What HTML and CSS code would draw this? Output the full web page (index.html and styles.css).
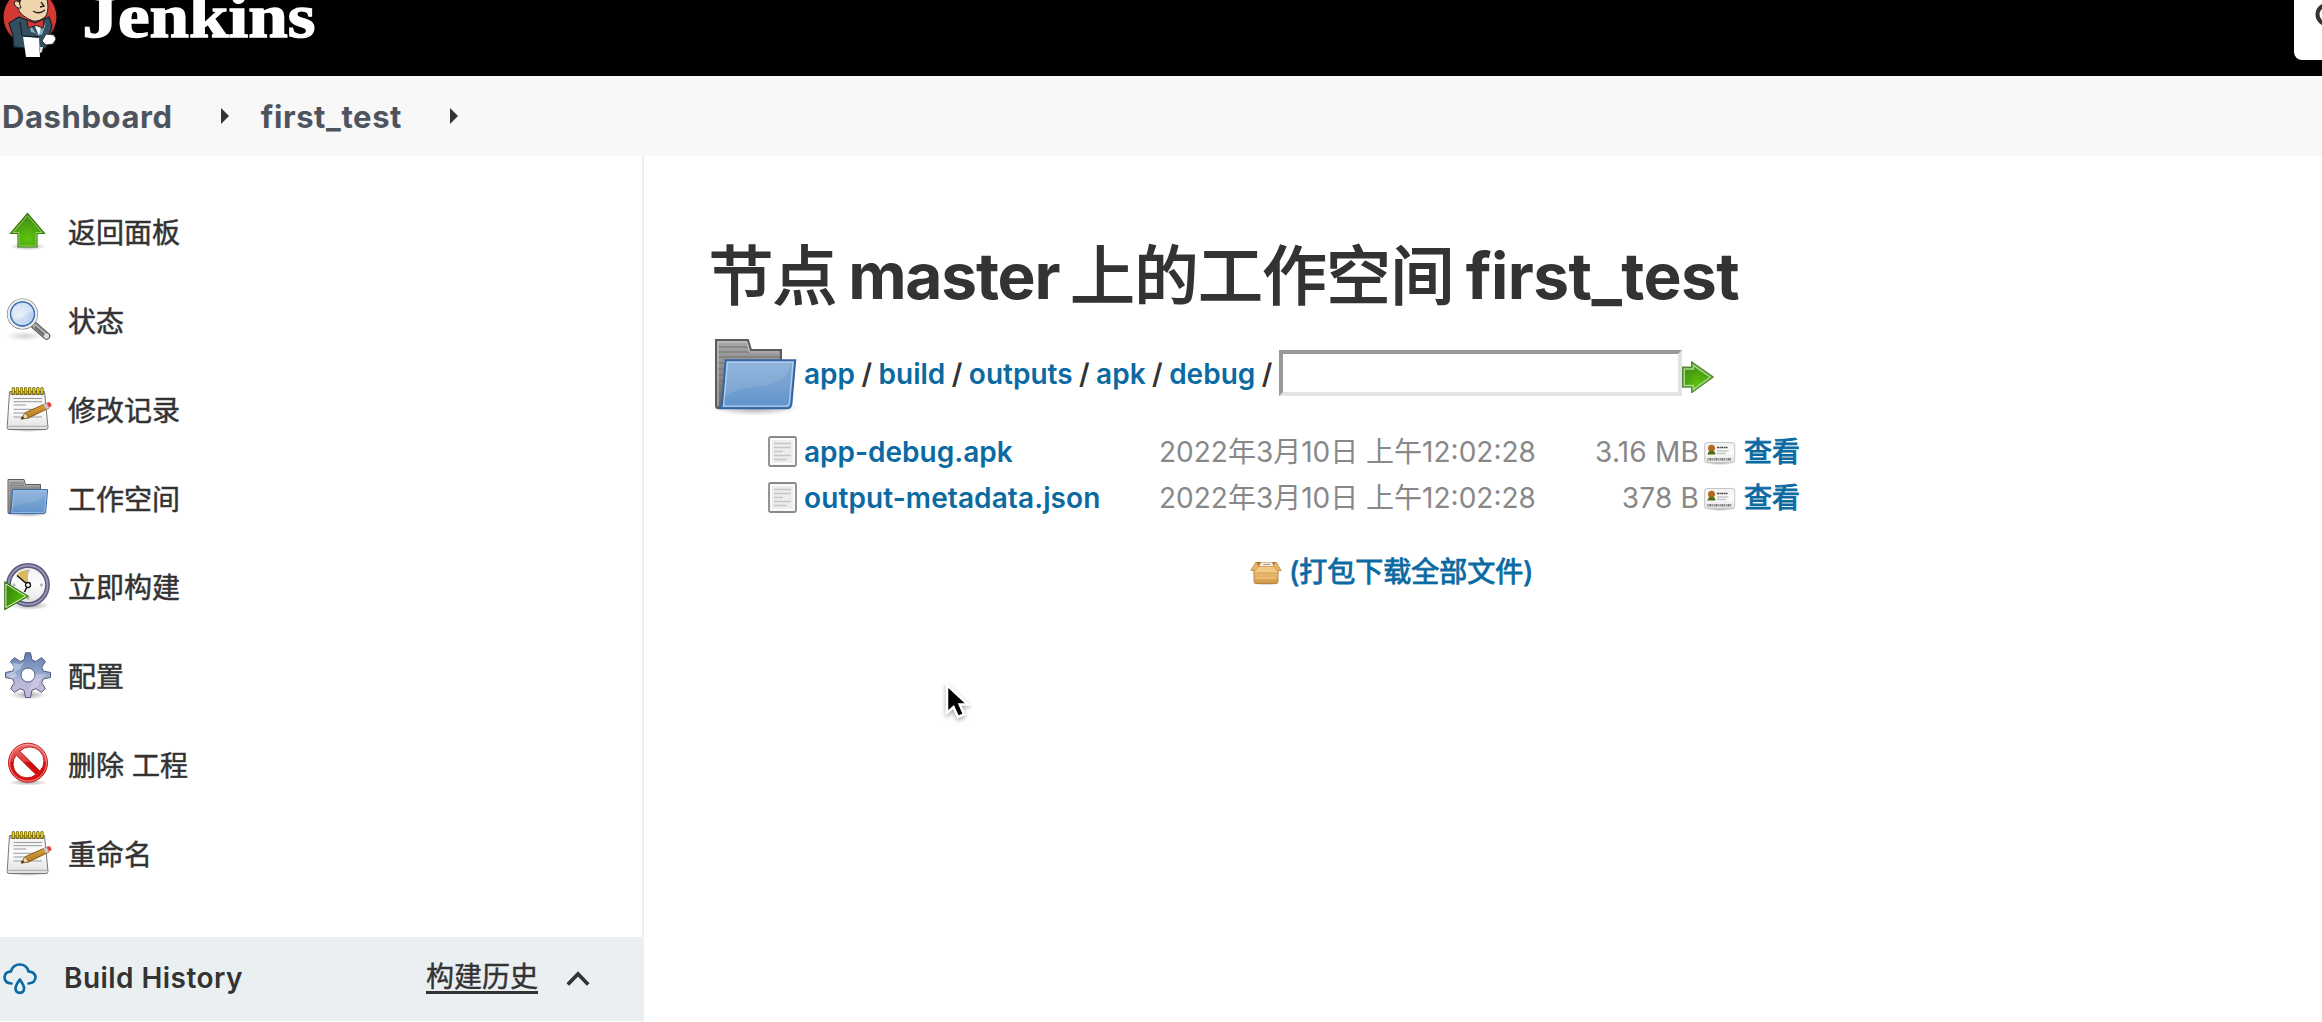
FILE: index.html
```html
<!DOCTYPE html>
<html lang="zh-CN">
<head>
<meta charset="utf-8">
<title>first_test [Jenkins]</title>
<link rel="stylesheet" href="styles.css">
</head>
<body>
<svg class="sprite" width="0" height="0" aria-hidden="true">
  <defs>
    <radialGradient id="shade"><stop offset="0" stop-color="#000" stop-opacity=".35"/><stop offset="1" stop-color="#000" stop-opacity="0"/></radialGradient>
    <radialGradient id="green" cx=".5" cy=".75" r=".7"><stop offset="0" stop-color="#5fc40c"/><stop offset="1" stop-color="#3f8a16"/></radialGradient>
    <linearGradient id="play" x1="0" y1="0" x2="1" y2=".3"><stop offset="0" stop-color="#35800c"/><stop offset="1" stop-color="#55bd08"/></linearGradient>
    <radialGradient id="glass" cx=".4" cy=".55" r=".65"><stop offset="0" stop-color="#e0ebf8"/><stop offset="1" stop-color="#a6c6ea"/></radialGradient>
    <linearGradient id="paper" x1="0" y1="0" x2="0" y2="1"><stop offset="0" stop-color="#f0f0f0"/><stop offset=".5" stop-color="#fdfdfd"/><stop offset="1" stop-color="#e0e0e0"/></linearGradient>
    <linearGradient id="blue" x1="0" y1="0" x2="0" y2="1"><stop offset="0" stop-color="#85add9"/><stop offset=".6" stop-color="#729fcf"/><stop offset="1" stop-color="#6093cc"/></linearGradient>
    <linearGradient id="gray" x1="0" y1="0" x2="0" y2="1"><stop offset="0" stop-color="#a8a8a8"/><stop offset=".5" stop-color="#888"/><stop offset="1" stop-color="#666"/></linearGradient>
    <linearGradient id="gearfill" x1="0" y1="0" x2="0" y2="1"><stop offset="0" stop-color="#5f7db1"/><stop offset=".45" stop-color="#92a5cb"/><stop offset=".6" stop-color="#b6b6d6"/><stop offset="1" stop-color="#c8bbdc"/></linearGradient>
    <linearGradient id="red" x1="0" y1="0" x2="0" y2="1"><stop offset="0" stop-color="#ec7272"/><stop offset=".48" stop-color="#dd3a3a"/><stop offset=".5" stop-color="#cc0808"/><stop offset="1" stop-color="#dd1616"/></linearGradient>
    <linearGradient id="pencil" x1="0" y1="0" x2=".4" y2="1"><stop offset="0" stop-color="#eebd55"/><stop offset="1" stop-color="#ac701c"/></linearGradient>
    <linearGradient id="carton" x1="0" y1="0" x2="0" y2="1"><stop offset="0" stop-color="#d8a051"/><stop offset=".4" stop-color="#e9b96e"/><stop offset="1" stop-color="#d29646"/></linearGradient>

    <symbol id="up" viewBox="0 0 48 48">
      <ellipse cx="24" cy="38.500" rx="18" ry="4" fill="url(#shade)"/>
      <path d="M23.500 5.500 40.500 25.500H33V39H14V25.500H6.500Z" fill="url(#green)" stroke="#3a7a0c" stroke-width="1.200"/>
      <path d="M23.500 7.500 38 24.500H32V38H15V24.500H9Z" fill="none" stroke="#a5dc7a" stroke-width=".8"/>
    </symbol>
    <symbol id="search" viewBox="0 0 48 48">
      <ellipse cx="21" cy="39" rx="19" ry="5" fill="url(#shade)" opacity=".5"/>
      <path d="M30.500 28.500 42.500 39" stroke="#555" stroke-width="7.500" stroke-linecap="round"/>
      <path d="M30.500 28.500 42.500 39" stroke="#aaa" stroke-width="5" stroke-linecap="round"/>
      <path d="M31 30 41 39" stroke="#666" stroke-width="1.800"/>
      <circle cx="42.500" cy="39" r="2.600" fill="#ddd"/>
      <circle cx="18.500" cy="17" r="13.600" fill="url(#glass)" stroke="#777" stroke-width="4"/>
      <circle cx="18.500" cy="17" r="13.700" fill="none" stroke="#eeeeec" stroke-width="2.600"/>
      <circle cx="18.500" cy="17" r="12" fill="none" stroke="#3a6fb5" stroke-width="1.300"/>
      <path d="M8 17a10.500 10.500 0 0 1 21-2C22 14 19 23 10 22Z" fill="#fff" opacity=".35"/>
    </symbol>
    <symbol id="notepad" viewBox="0 0 48 48">
      <ellipse cx="24" cy="43.500" rx="20" ry="2.500" fill="url(#shade)"/>
      <path d="M5.500 5.500H40.500L44 41.500Q44 43.500 42 43.500H5Q3 43.500 3.200 41.500Z" fill="url(#paper)" stroke="#777"/>
      <path d="M6 6H40L40.300 9H5.800Z" fill="#aaa"/>
      <path d="M3.500 40.300H43.700" stroke="#aaa"/>
      <path d="M9.500 12.500H38M9.500 15.700H38M9.500 19H22M9.500 23.300H38M9.500 27H34M9.500 31H38" stroke="#999"/>
      <path d="M9.300 2.500V7.500M13.400 2.500V7.500M17.500 2.500V7.500M21.600 2.500V7.500M25.700 2.500V7.500M29.800 2.500V7.500M33.900 2.500V7.500M38 2.500V7.500" stroke="#6b5c00" stroke-width="3.200" stroke-linecap="round"/>
      <path d="M9.300 2.700V7M13.400 2.700V7M17.500 2.700V7M21.600 2.700V7M25.700 2.700V7M29.800 2.700V7M33.900 2.700V7M38 2.700V7" stroke="#ecd51e" stroke-width="1.700" stroke-linecap="round"/>
      <path d="M17 33 21.500 26.500 42 17.500 45 22 24.500 32Z" fill="url(#pencil)" stroke="#805310" stroke-width=".9"/>
      <path d="M17 33 21.500 26.500 24.500 32Z" fill="#efdcb0" stroke="#805310" stroke-width=".7"/>
      <path d="M17 33 19 30.200 20.300 32.300Z" fill="#222"/>
      <path d="M39.500 18.500 43 17 45.500 21.500 42 23.300Z" fill="#c9c9c9"/>
      <path d="M42.500 17 45 16.200Q47.500 17 47.300 20L45 21.500Z" fill="#ef3232" stroke="#d88" stroke-width=".7"/>
    </symbol>
    <symbol id="folder" viewBox="0 0 48 48">
      <ellipse cx="23.500" cy="38.500" rx="22" ry="3.800" fill="url(#shade)"/>
      <path d="M4 4.500H20L21.500 9.500H36.500V20L10 38.500H4.800Q4 38.500 4 37Z" fill="url(#gray)" stroke="#5c5c5c"/>
      <path d="M5 8H20M5 10.500H36M5 13H36M5 16H10M5 19H9M5 22H9M5 25H9M5 28H8M5 31H8" stroke="#707070" stroke-width=".6"/>
      <path d="M5 37.500V5.500H19.300L20.800 10.500H35.500" fill="none" stroke="#c9c9c9" stroke-width=".5"/>
      <path d="M8.800 14.600H43.600L41.700 36.500Q41.400 38.600 39.500 38.600H5.200Q7 38 7.200 35Z" fill="url(#blue)" stroke="#3465a4"/>
      <path d="M9.700 15.600H42.500L40.700 36Q40.300 37.600 39 37.600H7.800Z" fill="none" stroke="#b7d0ec" stroke-width=".6"/>
      <path d="M8.300 33 9.700 16H42Q39 26 27 27.500 13 28.500 8.300 33Z" fill="#fff" opacity=".1"/>
    </symbol>
    <symbol id="clock" viewBox="0 0 48 48">
      <ellipse cx="26" cy="42.500" rx="20" ry="4.500" fill="url(#shade)"/>
      <circle cx="24" cy="22" r="19.500" fill="url(#paper)" stroke="#5c5b7c" stroke-width="4.800"/>
      <circle cx="24" cy="22" r="19.500" fill="none" stroke="#9897b8" stroke-width="1.800"/>
      <path d="M24 22 12.500 12Q17 6.500 24 7Z" fill="#dcb95b"/>
      <circle cx="24" cy="8" r="1.700" fill="#bbb"/><circle cx="37.500" cy="22" r="1.700" fill="#bbb"/><circle cx="24" cy="35" r="1.700" fill="#bbb"/><circle cx="10" cy="22" r="1.700" fill="#bbb"/>
      <path d="M24 22 13 12.500M24 22 20.500 29" stroke="#111" stroke-width="1.500"/>
      <circle cx="24" cy="22" r="2.500" fill="#fff" stroke="#111" stroke-width="1.300"/>
      <path d="M.8 19V46.500L24 33.200Z" fill="url(#play)" stroke="#347510" stroke-width="1.200"/>
      <path d="M1.900 21V44.600L21.800 33.200Z" fill="none" stroke="#e3f4d6" stroke-width="1"/>
    </symbol>
    <symbol id="gear" viewBox="0 0 48 48">
      <ellipse cx="24" cy="43" rx="18" ry="4.500" fill="url(#shade)"/>
      <path fill-rule="evenodd" d="M21.500 .8H26.500L28 8Q30 8.500 31.800 9.500L37.500 5.600 41.400 9.500 37.700 15.200Q38.700 17 39.200 19L46.500 20.500V25.500L39.200 27Q38.700 29 37.700 30.800L41.400 36.500 37.500 40.400 31.800 36.700Q30 37.700 28 38.200L26.500 45.500H21.500L20 38.200Q18 37.700 16.200 36.700L10.500 40.400 6.600 36.500 10.300 30.800Q9.300 29 8.800 27L1.500 25.500V20.500L8.800 19Q9.300 17 10.300 15.200L6.600 9.500 10.500 5.600 16.200 9.500Q18 8.500 20 8ZM24 16A7 7 0 1 0 24 30A7 7 0 1 0 24 16Z" fill="url(#gearfill)" stroke="#515e82" stroke-width="1" stroke-linejoin="round"/>
      <path d="M8 11 16.500 12 20 10 16 17 11 20 13 24 8 27 3 24V22L10 19Z" fill="#d7e2f2" opacity=".5"/>
      <path d="M32 22 42 22 40 25 36 28 34 34 29 37 25 39 28 31Z" fill="#f0e9f7" opacity=".3"/>
    </symbol>
    <symbol id="forbid" viewBox="0 0 48 48">
      <ellipse cx="24" cy="41.500" rx="20" ry="3" fill="url(#shade)"/>
      <path fill-rule="evenodd" d="M24 2.200A19.500 19.500 0 1 0 24 41.200A19.500 19.500 0 1 0 24 2.200ZM15.800 10.200A14 14 0 0 1 35.900 30ZM12.200 14A14 14 0 0 0 32 33.600Z" fill="url(#red)" stroke="#b80f0f" stroke-width=".9"/>
      <circle cx="24" cy="21.700" r="18.400" fill="none" stroke="#f6a3a3" stroke-width=".9"/>
    </symbol>
    <symbol id="file" viewBox="0 0 32 32">
      <rect x="1" y="1" width="27" height="29" rx="1.500" fill="#f6f6f6" stroke="#8a8a8a" stroke-width="1.800"/>
      <rect x="3.500" y="3.500" width="22" height="24" fill="#ededed" stroke="#fff"/>
      <path d="M6 7.500H23M6 11.500H23M6 15.500H15M6 19.500H23M6 23.500H19" stroke="#c6c6c6" stroke-width="1.500"/>
    </symbol>
    <symbol id="card" viewBox="0 0 32 32">
      <ellipse cx="16" cy="27" rx="15" ry="2" fill="url(#shade)"/>
      <rect x=".7" y="6.500" width="30" height="20" rx="2" fill="url(#paper)" stroke="#c6c6c6"/>
      <circle cx="7.500" cy="12.200" r="3.500" fill="#b46a20"/>
      <path d="M3.500 18.500Q4 14.500 7.500 15 11.500 14.500 11.500 18.500Z" fill="#4c6b12"/>
      <path d="M13 11.500H24" stroke="#444" stroke-width="1.600" stroke-dasharray="2 .5 1.300 .4"/>
      <path d="M13 15H24.500M13 17.500H22" stroke="#c5c5c5" stroke-width="1.300"/>
      <path d="M3.500 23.300H28" stroke="#777" stroke-width="2.600" stroke-dasharray="1 .8 2 .6 .8 .9"/>
    </symbol>
    <symbol id="box" viewBox="0 0 32 32">
      <ellipse cx="16" cy="27" rx="14" ry="2.500" fill="url(#shade)"/>
      <path d="M6 6H26L28 13H4Z" fill="#b57a30"/>
      <path d="M11 6.500H22L24 10.500H9Z" fill="#f7f2e8"/>
      <path d="M13 8.500H20" stroke="#999"/>
      <path d="M4 12H28V25.500Q28 27.500 26 27.500H6Q4 27.500 4 25.500Z" fill="url(#carton)" stroke="#b37b31" stroke-width=".8"/>
      <path d="M6 6 .8 14.500H5L9 10ZM26 6 31.200 14.500H27L23 10Z" fill="#e6b66c" stroke="#b37b31" stroke-width=".7"/>
      <path d="M8 10.500H24L29 17H3Z" fill="#f0c884" stroke="#c78f44" stroke-width=".6"/>
      <path d="M5.500 22H26.500" stroke="#f1cc8d"/>
    </symbol>
    <symbol id="go" viewBox="0 0 32 32">
      <path d="M.7 6.200H9.700V1L31 16 9.700 31.500V26H.7Z" fill="url(#green)" stroke="#57893a" stroke-width="1.400"/>
      <path d="M2.300 7.900H11.400V4.300L28.200 16 11.400 28.500V24.400H2.300Z" fill="none" stroke="#a6d889" stroke-width="1.500"/>
    </symbol>
  </defs>
</svg>

<header class="header">
  <svg class="logo" width="320" height="76" viewBox="0 0 320 76" aria-label="Jenkins">
    <ellipse cx="30" cy="17" rx="26.500" ry="27" fill="#d33833"/>
    <path d="M18-4H46Q50 8 46 16 40 22 33 21 20 16 18 8Z" fill="#efd4ae" stroke="#222" stroke-width="1"/>
    <path d="M14 2Q19-1 20 5L21 8Q15 9 14 2Z" fill="#efd4ae" stroke="#222" stroke-width="1"/>
    <path d="M15-4H22L20 4 18 0Z" fill="#1b1b1b"/>
    <path d="M33 11Q39 15 45 10M41 2 44 6 40 7" fill="none" stroke="#222" stroke-width="1.300"/>
    <path d="M19 17 34 23 49 17 52 26 49 36 46 48 38 49 14 47 13 36 9 23Q14 20 19 17Z" fill="#335061" stroke="#16232c" stroke-width="1.300"/>
    <path d="M29 23 37 35 46 23 42 35 31 32Z" fill="#81b0c4"/>
    <path d="M34 24H42L39 36Z" fill="#f4f4f4"/>
    <path d="M27 20 35 23 44 19 43 28 36 25.500 28 28Z" fill="#d33833" stroke="#222" stroke-width="1"/>
    <path d="M23 36 39 38 40 57 26 57Z" fill="#fff"/>
    <path d="M20 22 22 36M23 36 39 37" stroke="#16232c" stroke-width="1.300"/>
    <path d="M46 34 54 35 56 39 53 44 46 45 42 41Z" fill="#fff" stroke="#333" stroke-width="1"/>
    <path d="M40 47 43 47 42 52 40 53Z" fill="#ddd"/>
    <text class="wordmark" x="82.500" y="36.500" textLength="233" lengthAdjust="spacingAndGlyphs">Jenkins</text>
  </svg>
  <div class="searchbox">
    <svg width="28" height="60" viewBox="0 0 28 60"><circle cx="33" cy="14.500" r="9.500" fill="none" stroke="#333" stroke-width="4"/></svg>
  </div>
</header>

<nav class="crumbs">
  <a>Dashboard</a><span class="tri"></span><a>first_test</a><span class="tri"></span>
</nav>

<div class="page">
  <aside class="side">
    <ul class="tasks">
      <li><svg><use href="#up"/></svg><span>返回面板</span></li>
      <li><svg><use href="#search"/></svg><span>状态</span></li>
      <li><svg><use href="#notepad"/></svg><span>修改记录</span></li>
      <li><svg><use href="#folder"/></svg><span>工作空间</span></li>
      <li><svg><use href="#clock"/></svg><span>立即构建</span></li>
      <li><svg><use href="#gear"/></svg><span>配置</span></li>
      <li><svg><use href="#forbid"/></svg><span>删除 工程</span></li>
      <li><svg><use href="#notepad"/></svg><span>重命名</span></li>
    </ul>
    <div class="history">
      <svg class="cloud" width="34" height="32" viewBox="0 0 34 32" fill="none" stroke="#0b6aa2" stroke-width="2.700" stroke-linecap="round" stroke-linejoin="round">
        <path d="M8.500 20.500Q1.500 20 1.500 14 2 8.800 8 8.300 10 1.500 16.800 1.500 23.500 1.500 25.500 8.300 32.300 9 32.500 14.500 32 20 25.500 20.500"/>
        <path d="M16.800 16.500Q12.500 22.500 12.500 25.500 12.800 29.800 16.800 29.800 20.800 29.800 21.100 25.500 21.100 22.500 16.800 16.500Z"/>
      </svg>
      <span class="title">Build History</span>
      <a class="trend">构建历史</a>
      <svg class="chev" width="24" height="16" viewBox="0 0 24 16"><path d="M1.800 13.500 12 3 22.200 13.500" fill="none" stroke="#333" stroke-width="3.800"/></svg>
    </div>
  </aside>

  <main class="main">
    <h1><span class="han">节点</span> <span class="lat">master</span> <span class="han">上的工作空间</span> <span class="lat job">first_test</span></h1>
    <form class="path">
      <svg class="bigfolder"><use href="#folder"/></svg>
      <span class="trail"><a>app</a> / <a>build</a> / <a>outputs</a> / <a>apk</a> / <a>debug</a> /</span>
      <input type="text" class="pattern">
      <svg class="go"><use href="#go"/></svg>
    </form>
    <div class="files">
      <svg><use href="#file"/></svg><a class="name">app-debug.apk</a><span class="date">2022年3月10日 上午12:02:28</span><span class="size">3.16 MB</span><svg><use href="#card"/></svg><a class="cn">查看</a>
      <svg><use href="#file"/></svg><a class="name meta">output-metadata.json</a><span class="date">2022年3月10日 上午12:02:28</span><span class="size">378 B</span><svg><use href="#card"/></svg><a class="cn">查看</a>
    </div>
    <div class="zip"><svg><use href="#box"/></svg><a class="cn">(打包下载全部文件)</a></div>
  </main>
</div>

<svg class="pointer" width="30" height="44" viewBox="0 0 30 44">
  <path d="M3 2V30L9.500 24 14 34 20 31.300 15.700 21.500H24Z" fill="#000" stroke="#fff" stroke-width="2.500"/>
</svg>
</body>
</html>
```

FILE: styles.css
```css
* { box-sizing: border-box; }
html, body { height: 100%; }
body {
  margin: 0;
  display: flex;
  flex-direction: column;
  overflow: hidden;
  background: #fff;
  color: #333;
  font: 400 28px/1 Inter, "Noto Sans CJK SC", sans-serif;
}
svg { display: block; flex: none; }
.sprite { position: absolute; }

.header {
  height: 76px;
  flex: none;
  display: flex;
  justify-content: space-between;
  background: #000;
}
.wordmark { font: 700 62px "Liberation Serif", serif; fill: #fff; stroke: #fff; stroke-width: 1.4px; }
.searchbox {
  width: 28px;
  height: 60px;
  overflow: hidden;
  background: #fff;
  border-bottom-left-radius: 8px;
}

.crumbs {
  height: 80px;
  flex: none;
  display: flex;
  align-items: center;
  padding-left: 2px;
  background: #f8f8f8;
  color: #4d545d;
  font-size: 31px;
  font-weight: 600;
  letter-spacing: .6px;
}
.tri {
  margin: 0 32px 0 48px;
  border: 8px solid transparent;
  border-left-color: #333;
  border-right: 0;
}

.page { flex: 1; display: flex; min-height: 0; }
.side { width: 644px; border-right: 2px solid #eaeff2; }
.tasks {
  margin: 0;
  padding: 32px 0 39px 4px;
  list-style: none;
}
.tasks li { height: 88.75px; display: flex; align-items: center; gap: 16px; }
.tasks svg { width: 48px; height: 48px; }
.tasks span { padding-top: 2px; -webkit-text-stroke: .5px #333; }

.history {
  height: 84px;
  display: flex;
  align-items: center;
  padding: 0 52px 0 3px;
  background: #eaeff2;
}
.title { margin: 0 0 2px 27px; font-weight: 600; letter-spacing: .45px; }
.trend {
  margin: 0 0 1px auto;
  -webkit-text-stroke: .4px #333;
  border-bottom: 3px solid #333;
}
.chev { margin-left: 28px; }

.main { padding: 80px 0 0 65px; }
h1 { margin: 0; font-size: 64px; line-height: 80px; font-weight: 700; white-space: nowrap; word-spacing: -4px; }
.lat { letter-spacing: -1.2px; }
.job { letter-spacing: -.6px; }
.han { font-weight: 400; -webkit-text-stroke: 2px #333; }

a { color: #0b6aa2; font-weight: 600; }
a.cn { font-weight: 400; -webkit-text-stroke: .9px #0b6aa2; }
.crumbs a { color: inherit; font-weight: 700; }
.history a { color: #333; font-weight: 400; }

.path { margin: 14px 0 0 -1px; height: 96px; display: flex; align-items: flex-start; }
.bigfolder { width: 96px; height: 96px; margin-top: 1px; }
.trail { padding-top: 30px; font-weight: 600; word-spacing: -.6px; white-space: nowrap; width: 475px; }
.pattern {
  width: 403px;
  height: 46px;
  margin-top: 20px;
  padding: 0;
  background: #fff;
  border: 4px solid;
  border-color: #999 #e3e3e3 #e3e3e3 #999;
}
.go { width: 32px; height: 32px; margin-top: 31px; }

.files {
  margin-top: 3px;
  padding-left: 59px;
  display: grid;
  grid-template-columns: 36px 355px 378px 162px 45px 58px;
  grid-auto-rows: 46px;
  align-items: center;
}
.files svg { width: 32px; height: 32px; }
.size + svg { margin-left: 5px; }
.date, .size { color: #888; white-space: nowrap; }
.size { text-align: right; letter-spacing: .2px; }
.meta { letter-spacing: .1px; }
.zip { margin-top: 28px; padding-left: 541px; height: 46px; display: flex; align-items: center; gap: 7px; white-space: nowrap; }
.zip svg { width: 32px; height: 32px; }

.pointer { position: absolute; left: 944px; top: 683px; filter: drop-shadow(0 2px 2px rgba(0, 0, 0, .35)); }
```
